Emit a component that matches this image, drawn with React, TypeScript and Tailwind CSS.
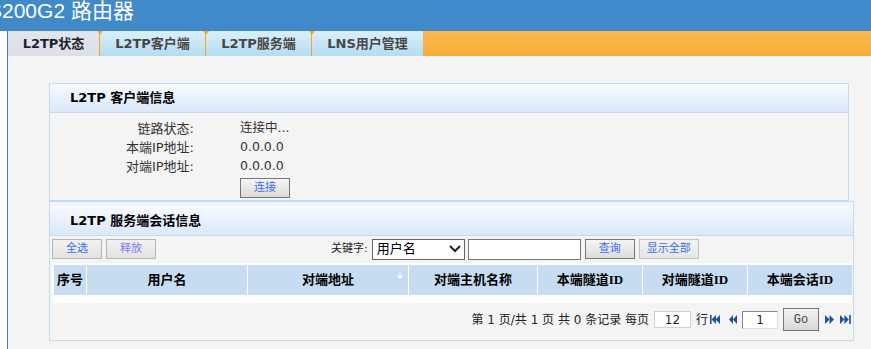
import React from "react";

const Tri = ({ side }: { side: "first" | "prev" | "next" | "last" }) => {
  const c = "#1d4f9e";
  if (side === "first")
    return (
      <svg width="10" height="9" viewBox="0 0 10 9">
        <rect x="0" y="0" width="1.6" height="9" fill={c} />
        <polygon points="6,0 1.6,4.5 6,9" fill={c} />
        <polygon points="10,0 5.6,4.5 10,9" fill={c} />
      </svg>
    );
  if (side === "prev")
    return (
      <svg width="8" height="9" viewBox="0 0 8 9">
        <polygon points="4,0 0,4.5 4,9" fill={c} />
        <polygon points="8,0 4,4.5 8,9" fill={c} />
      </svg>
    );
  if (side === "next")
    return (
      <svg width="9" height="9" viewBox="0 0 9 9">
        <polygon points="0,0 4.5,4.5 0,9" fill={c} />
        <polygon points="4.5,0 9,4.5 4.5,9" fill={c} />
      </svg>
    );
  return (
    <svg width="11" height="9" viewBox="0 0 11 9">
      <polygon points="0,0 4.4,4.5 0,9" fill={c} />
      <polygon points="4.4,0 8.8,4.5 4.4,9" fill={c} />
      <rect x="9.2" y="0" width="1.6" height="9" fill={c} />
    </svg>
  );
};

const TabMark = () => (
  <span className="absolute left-[-3px] top-0 w-0 h-0 border-l-[3px] border-r-[3px] border-t-[4px] border-l-transparent border-r-transparent border-t-[#f5a623]" />
);

export default function App() {
  const cols = [
    { t: "序号", w: "w-[32px]" },
    { t: "用户名", w: "w-[160px]" },
    { t: "对端地址", w: "w-[160px]", arrow: true },
    { t: "对端主机名称", w: "w-[128px]" },
    { t: "本端隧道ID", w: "w-[104px]" },
    { t: "对端隧道ID", w: "w-[104px]" },
    { t: "本端会话ID", w: "w-[104px]" },
  ];
  return (
    <div className="w-[871px] h-[349px] overflow-hidden bg-white font-['DejaVu_Sans','Noto_Sans_CJK_SC',sans-serif] text-[#222]">
      {/* top header */}
      <div className="h-[31px] bg-[#408aca] overflow-hidden">
        <div className="-ml-[12px] text-white text-[21px] leading-none whitespace-nowrap font-['Liberation_Sans','Noto_Sans_CJK_SC',sans-serif] pt-[0px]">
          S200G2 路由器
        </div>
      </div>
      <div className="flex h-[318px]">
        <div className="w-[7px] bg-white" />
        <div className="flex-1 border-l border-[#3b7fd0] flex flex-col">
          {/* tab bar */}
          <div className="h-[25px] flex bg-gradient-to-b from-[#fbb950] to-[#f7ac35]">
            <div className="w-[91px] h-full flex items-center justify-center bg-gradient-to-b from-[#e2e6eb] to-[#dce0e6] text-[13px] font-bold text-[#1e1e30]">
              L2TP状态
            </div>
            <div className="relative w-[106px] h-full border-l border-[#f5a623] flex items-center justify-center bg-gradient-to-b from-[#dbf0fa] to-[#b3dcf1] text-[13px] font-bold text-[#474747]">
              <TabMark />
              L2TP客户端
            </div>
            <div className="relative w-[106px] h-full border-l border-[#f5a623] flex items-center justify-center bg-gradient-to-b from-[#dbf0fa] to-[#b3dcf1] text-[13px] font-bold text-[#474747]">
              <TabMark />
              L2TP服务端
            </div>
            <div className="relative w-[112px] h-full border-l border-[#f5a623] flex items-center justify-center bg-gradient-to-b from-[#dbf0fa] to-[#b3dcf1] text-[13px] font-bold text-[#474747]">
              <TabMark />
              LNS用户管理
            </div>
          </div>
          {/* body */}
          <div className="flex-1 bg-[#f4f4f4] pl-[41px] pt-[27px]">
            {/* panel 1 */}
            <div className="w-[800px] border border-[#c4daf0]">
              <div className="h-[29px] border-b border-[#c4daf0] bg-gradient-to-b from-[#f6faff] to-[#dae8fa] flex items-center pl-[20px] text-[13px] font-bold text-black">
                L2TP 客户端信息
              </div>
              <div className="pt-[6px] pb-[2px] text-[13px] text-[#333]">
                {[
                  ["链路状态:", "连接中..."],
                  ["本端IP地址:", "0.0.0.0"],
                  ["对端IP地址:", "0.0.0.0"],
                ].map(([l, v]) => (
                  <div key={l} className="flex h-[19px] items-center">
                    <div className="w-[144px] text-right">{l}</div>
                    <div className="ml-[46px] text-[12.5px]">{v}</div>
                  </div>
                ))}
                <div className="flex mt-[2px]">
                  <div className="w-[144px]" />
                  <button className="ml-[46px] w-[50px] h-[20px] border border-[#777] bg-gradient-to-b from-[#f5f5f5] to-[#dcdcdc] text-[11px] text-[#3b6cf5] flex items-center justify-center">
                    连接
                  </button>
                </div>
              </div>
            </div>
            {/* panel 2 */}
            <div className="w-[805px] border border-[#c4daf0] border-t-0">
              <div className="border-t border-[#c4daf0] pt-[4px] bg-[#f2f5f9]">
                <div className="h-[29px] bg-gradient-to-b from-[#f6faff] to-[#dae8fa] flex items-center pl-[20px] text-[13px] font-bold text-black">
                  L2TP 服务端会话信息
                </div>
              </div>
              <div className="border-t border-[#c4daf0]" />
              {/* toolbar */}
              <div className="h-[26px] flex items-center pl-[2px]">
                <button className="w-[50px] h-[20px] border border-[#b5b5b5] bg-gradient-to-b from-[#f2f2f2] to-[#e2e2e2] text-[11px] text-[#3b6cf5] flex items-center justify-center">
                  全选
                </button>
                <button className="ml-[4px] w-[50px] h-[20px] border border-[#b5b5b5] bg-gradient-to-b from-[#f2f2f2] to-[#e2e2e2] text-[11px] text-[#7a7af5] flex items-center justify-center">
                  释放
                </button>
                <span className="ml-[175px] text-[11px] text-[#222]">关键字:</span>
                <div className="ml-[4px] w-[93px] h-[21px] border border-[#666] bg-white flex items-center justify-between pl-[4px] pr-[3px] text-[13px] text-black">
                  <span>用户名</span>
                  <svg width="12" height="8" viewBox="0 0 12 8">
                    <path d="M1 1 L6 6 L11 1" stroke="#222" strokeWidth="2" fill="none" />
                  </svg>
                </div>
                <div className="ml-[3px] w-[113px] h-[21px] border border-[#777] bg-white" />
                <button className="ml-[4px] w-[50px] h-[20px] border border-[#777] bg-gradient-to-b from-[#f5f5f5] to-[#dcdcdc] text-[11px] text-[#3b6cf5] flex items-center justify-center">
                  查询
                </button>
                <button className="ml-[4px] w-[60px] h-[20px] border border-[#c2c2c2] bg-gradient-to-b from-[#f3f3f3] to-[#e6e6e6] text-[11px] text-[#3b6cf5] flex items-center justify-center">
                  显示全部
                </button>
              </div>
              {/* table */}
              <div className="mt-[1px] ml-[2px] w-[800px] bg-white pt-[2px] pl-[2px] pb-[8px]">
                <div className="flex gap-[1px] h-[30px]">
                  {cols.map((c) => (
                    <div
                      key={c.t}
                      className={`${c.w} relative bg-[#c6dcf0] flex items-center justify-center text-[13px] font-bold text-black font-['Liberation_Serif','Noto_Sans_CJK_SC',serif]`}
                    >
                      {c.t}
                      {c.arrow && (
                        <svg className="absolute right-[5px] top-[7px]" width="6" height="7" viewBox="0 0 6 7">
                          <path d="M3 0 V6 M0.5 3.5 L3 6 L5.5 3.5" stroke="#fff" strokeWidth="1.2" fill="none" />
                        </svg>
                      )}
                    </div>
                  ))}
                </div>
              </div>
              {/* pagination */}
              <div className="h-[27px] mt-[3px] mb-[7px] flex items-center justify-end pr-[2px] text-[12px] text-[#222]">
                <span>第 1 页/共 1 页 共 0 条记录 每页</span>
                <div className="ml-[5px] w-[37px] h-[17px] border border-[#d0d0d0] bg-white flex items-center justify-center text-[12px]">
                  12
                </div>
                <span className="ml-[5px]">行</span>
                <span className="ml-[2px] flex items-center">
                  <Tri side="first" />
                </span>
                <span className="ml-[9px] flex items-center">
                  <Tri side="prev" />
                </span>
                <div className="ml-[5px] w-[36px] h-[18px] border border-[#888] border-b-[#ddd] border-r-[#ddd] bg-white flex items-center justify-center text-[12px]">
                  1
                </div>
                <button className="ml-[5px] w-[36px] h-[23px] border border-[#777] bg-gradient-to-b from-[#f2f2f2] to-[#d8d8d8] text-[12px] text-[#444] flex items-center justify-center font-['Liberation_Mono',monospace]">
                  Go
                </button>
                <span className="ml-[6px] flex items-center">
                  <Tri side="next" />
                </span>
                <span className="ml-[6px] flex items-center">
                  <Tri side="last" />
                </span>
              </div>
            </div>
          </div>
        </div>
      </div>
    </div>
  );
}
